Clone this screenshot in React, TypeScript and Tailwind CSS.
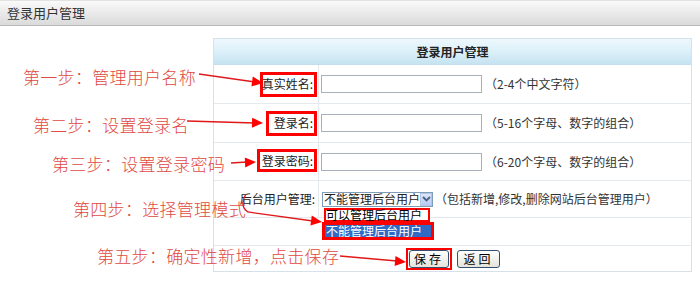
import React from "react";

// arrowhead triangle, tip at (tx,ty) pointing along from->tip
function head(fx: number, fy: number, tx: number, ty: number, len = 11, half = 5) {
  const dx = tx - fx;
  const dy = ty - fy;
  const m = Math.hypot(dx, dy);
  const ux = dx / m;
  const uy = dy / m;
  const bx = tx - ux * len;
  const by = ty - uy * len;
  return `${tx},${ty} ${bx - uy * half},${by + ux * half} ${bx + uy * half},${by - ux * half}`;
}

const arrows = [
  { d: "M199 74 L255 82", h: [199, 74, 263, 83] },
  { d: "M187 121 L255 123", h: [187, 121, 263, 123] },
  { d: "M231 163 L247 162", h: [231, 163, 256, 162] },
  { d: "M246 194 Q239 206 248 212 L313 221", h: [248, 212, 322, 222] },
  { d: "M340 256 L397 261", h: [340, 256, 406, 262] },
];

function Row({
  label,
  children,
  h,
}: {
  label: React.ReactNode;
  children: React.ReactNode;
  h: string;
}) {
  return (
    <div className={`grid grid-cols-[105px_1fr] border-b border-[#e4e9ee] ${h}`}>
      <div className="flex items-center justify-end border-r border-[#e4e9ee] pr-[1px]">{label}</div>
      <div className="flex items-center pl-[2px]">{children}</div>
    </div>
  );
}

function Input() {
  return <div className="h-[18px] w-[161px] border border-[#a7b0bb] bg-white" />;
}

export default function App() {
  return (
    <div className="relative h-[290px] w-[700px] overflow-hidden bg-white font-['Noto_Sans_CJK_SC',sans-serif] text-[12px] text-[#222]">
      {/* page title bar */}
      <div className="flex h-[26px] items-center border-t border-b border-t-[#e2e2e2] border-b-[#b9b9b9] bg-gradient-to-b from-[#fafafa] to-[#dadada] pl-[7px] text-[13px] text-[#333]">
        登录用户管理
      </div>

      {/* form table */}
      <div className="ml-[213px] mt-[12px] w-[479px] border border-[#d6e1ea]">
        <div className="flex h-[26px] items-center justify-center border-b border-[#c5dceb] bg-gradient-to-b from-[#eef8fd] via-[#dcf0f9] to-[#c6e3f1] font-bold text-[#222]">
          登录用户管理
        </div>

        <Row
          h="h-[39px]"
          label={
            <span className="flex h-[25px] w-[57px] items-center justify-end whitespace-nowrap border-[3px] border-[#f00] pr-[1px]">
              真实姓名:
            </span>
          }
        >
          <Input />
          <span className="ml-[3px] text-[#333]">（2-4个中文字符）</span>
        </Row>

        <Row
          h="h-[39px]"
          label={
            <span className="flex h-[25px] w-[51px] items-center justify-end whitespace-nowrap border-[3px] border-[#f00] pr-[1px]">
              登录名:
            </span>
          }
        >
          <Input />
          <span className="ml-[3px] text-[#333]">（5-16个字母、数字的组合）</span>
        </Row>

        <Row
          h="h-[38px]"
          label={
            <span className="mb-[2px] flex h-[23px] w-[60px] items-center justify-end whitespace-nowrap border-[3px] border-[#f00] pr-[1px]">
              登录密码:
            </span>
          }
        >
          <Input />
          <span className="ml-[3px] text-[#333]">（6-20个字母、数字的组合）</span>
        </Row>

        <Row h="h-[37px]" label={<span className="whitespace-nowrap pr-[2px]">后台用户管理:</span>}>
          <div className="relative ml-[1px] flex h-[15px] w-[111px] items-center border border-[#7f9db9] bg-white">
            <span className="flex-1 whitespace-nowrap pl-[1px] text-[12px] leading-[12px]">不能管理后台用户</span>
            <span className="flex h-[13px] w-[13px] items-center justify-center border border-[#b4c6e8] bg-gradient-to-b from-[#dce6fb] to-[#b7cbf5]">
              <svg width="9" height="6" viewBox="0 0 9 6">
                <path d="M1 1 L4.5 4.5 L8 1" fill="none" stroke="#4d6185" strokeWidth="1.8" />
              </svg>
            </span>
            {/* opened option list */}
            <div className="absolute left-[-1px] top-[15px] z-10 flex flex-col">
              <div className="ml-[2px] flex h-[14px] w-[106px] items-center whitespace-nowrap border-2 border-[#f00] bg-white text-[12px] leading-[10px] text-black">
                可以管理后台用户
              </div>
              <div className="flex h-[18px] w-[112px] items-center whitespace-nowrap border-[3px] border-[#f00] bg-[#316ac5] pl-[1px] leading-none text-white">
                不能管理后台用户
              </div>
            </div>
          </div>
          <span className="ml-[2px] whitespace-nowrap text-[#333]">（包括新增,修改,删除网站后台管理用户）</span>
        </Row>

        <div className="h-[28px] border-b border-[#e4e9ee]" />

        <div className="flex h-[25px] items-center justify-center gap-[5px] pl-[1px]">
          <div className="flex h-[22px] w-[46px] items-center justify-center border-2 border-[#f00]">
            <button className="h-[18px] w-[40px] rounded-[3px] border border-[#34506f] bg-gradient-to-b from-white to-[#e4e4dc] text-[12px] leading-none tracking-[3px] text-black">
              保存
            </button>
          </div>
          <button className="h-[18px] w-[43px] rounded-[3px] border border-[#34506f] bg-gradient-to-b from-white to-[#e4e4dc] text-[12px] leading-none tracking-[3px] text-black">
            返回
          </button>
        </div>
      </div>

      {/* annotations */}
      <span className="absolute left-[23px] top-[68px] whitespace-nowrap text-[17px] font-light leading-[17px] tracking-[0.3px] text-[#df4a42]">
        第一步：管理用户名称
      </span>
      <span className="absolute left-[33px] top-[116px] whitespace-nowrap text-[17px] font-light leading-[17px] tracking-[0.3px] text-[#df4a42]">
        第二步：设置登录名
      </span>
      <span className="absolute left-[52px] top-[155px] whitespace-nowrap text-[17px] font-light leading-[17px] tracking-[0.3px] text-[#df4a42]">
        第三步：设置登录密码
      </span>
      <span className="absolute left-[73px] top-[200px] whitespace-nowrap text-[17px] font-light leading-[17px] tracking-[0.3px] text-[#df4a42]">
        第四步：选择管理模式
      </span>
      <span className="absolute left-[97px] top-[247px] whitespace-nowrap text-[17px] font-light leading-[17px] tracking-[0.3px] text-[#df4a42]">
        第五步：确定性新增，点击保存
      </span>

      <svg className="pointer-events-none absolute left-0 top-0 z-20" width="700" height="290">
        {arrows.map((a, i) => (
          <g key={i}>
            <path d={a.d} fill="none" stroke="#e01818" strokeWidth="1.3" />
            <polygon points={head(a.h[0], a.h[1], a.h[2], a.h[3])} fill="#f00" />
          </g>
        ))}
      </svg>
    </div>
  );
}
